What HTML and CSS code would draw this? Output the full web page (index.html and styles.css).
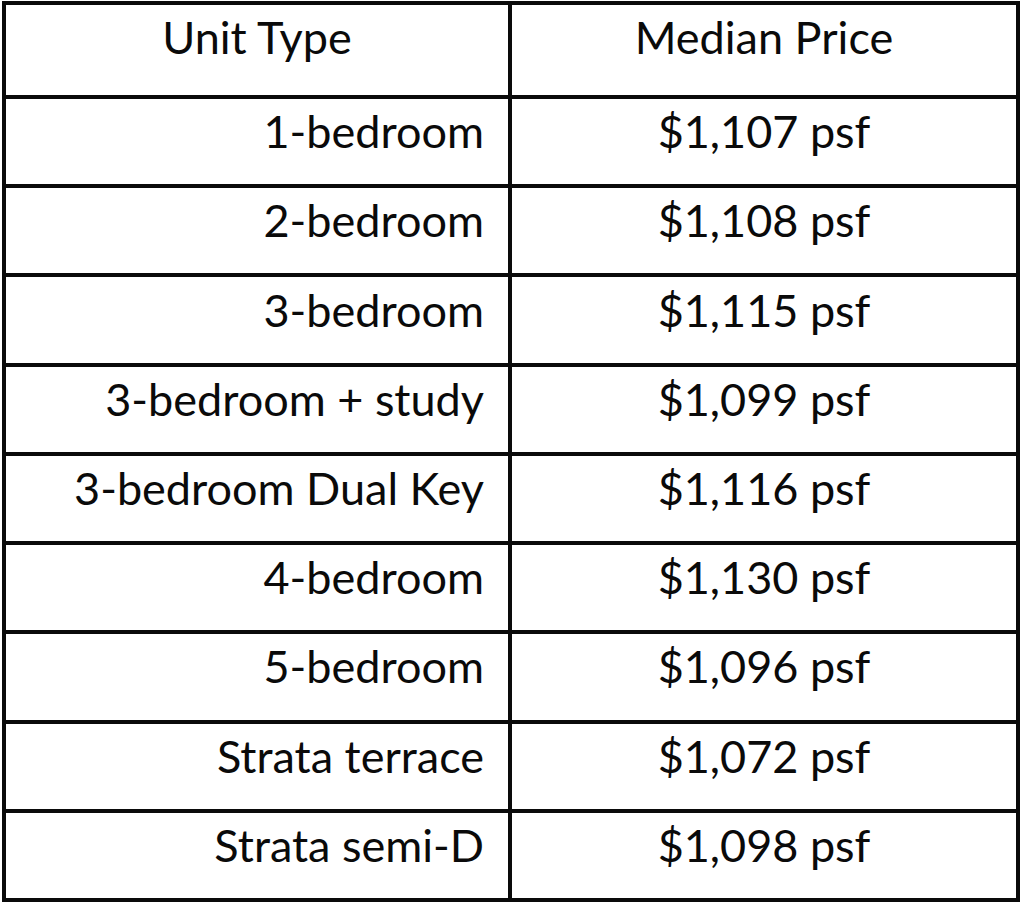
FILE: index.html
```html
<!DOCTYPE html>
<html>
<head>
<meta charset="utf-8">
<link rel="stylesheet" href="styles.css">
</head>
<body>
<div class="table">
  <div class="cell head">Unit Type</div>
  <div class="cell head">Median Price</div>
  <div class="cell type">1-bedroom</div>
  <div class="cell price">$1,107 psf</div>
  <div class="cell type">2-bedroom</div>
  <div class="cell price">$1,108 psf</div>
  <div class="cell type">3-bedroom</div>
  <div class="cell price">$1,115 psf</div>
  <div class="cell type">3-bedroom + study</div>
  <div class="cell price">$1,099 psf</div>
  <div class="cell type">3-bedroom Dual Key</div>
  <div class="cell price">$1,116 psf</div>
  <div class="cell type">4-bedroom</div>
  <div class="cell price">$1,130 psf</div>
  <div class="cell type">5-bedroom</div>
  <div class="cell price">$1,096 psf</div>
  <div class="cell type">Strata terrace</div>
  <div class="cell price">$1,072 psf</div>
  <div class="cell type">Strata semi-D</div>
  <div class="cell price">$1,098 psf</div>
</div>
</body>
</html>
```

FILE: styles.css
```css
html, body {
  margin: 0;
  padding: 0;
  background: #ffffff;
}
body {
  width: 1024px;
  height: 906px;
  overflow: hidden;
}
.table {
  margin: 1px 0 0 2px;
  width: 1018px;
  height: 901px;
  box-sizing: border-box;
  padding: 4px;
  background: #0a0a0a;
  display: grid;
  grid-template-columns: 502px 504px;
  grid-template-rows: 90px repeat(9, 1fr);
  gap: 4px;
}
.cell {
  background: #ffffff;
  display: flex;
  align-items: center;
  font-family: "Lato", "Open Sans", sans-serif;
  font-size: 45px;
  color: #0a0a0a;
  line-height: 1;
  white-space: nowrap;
  padding-bottom: 20px;
  box-sizing: border-box;
}
.head {
  justify-content: center;
  padding-bottom: 26px;
}
.type {
  justify-content: flex-end;
  padding-right: 24px;
}
.price {
  justify-content: center;
}
```
